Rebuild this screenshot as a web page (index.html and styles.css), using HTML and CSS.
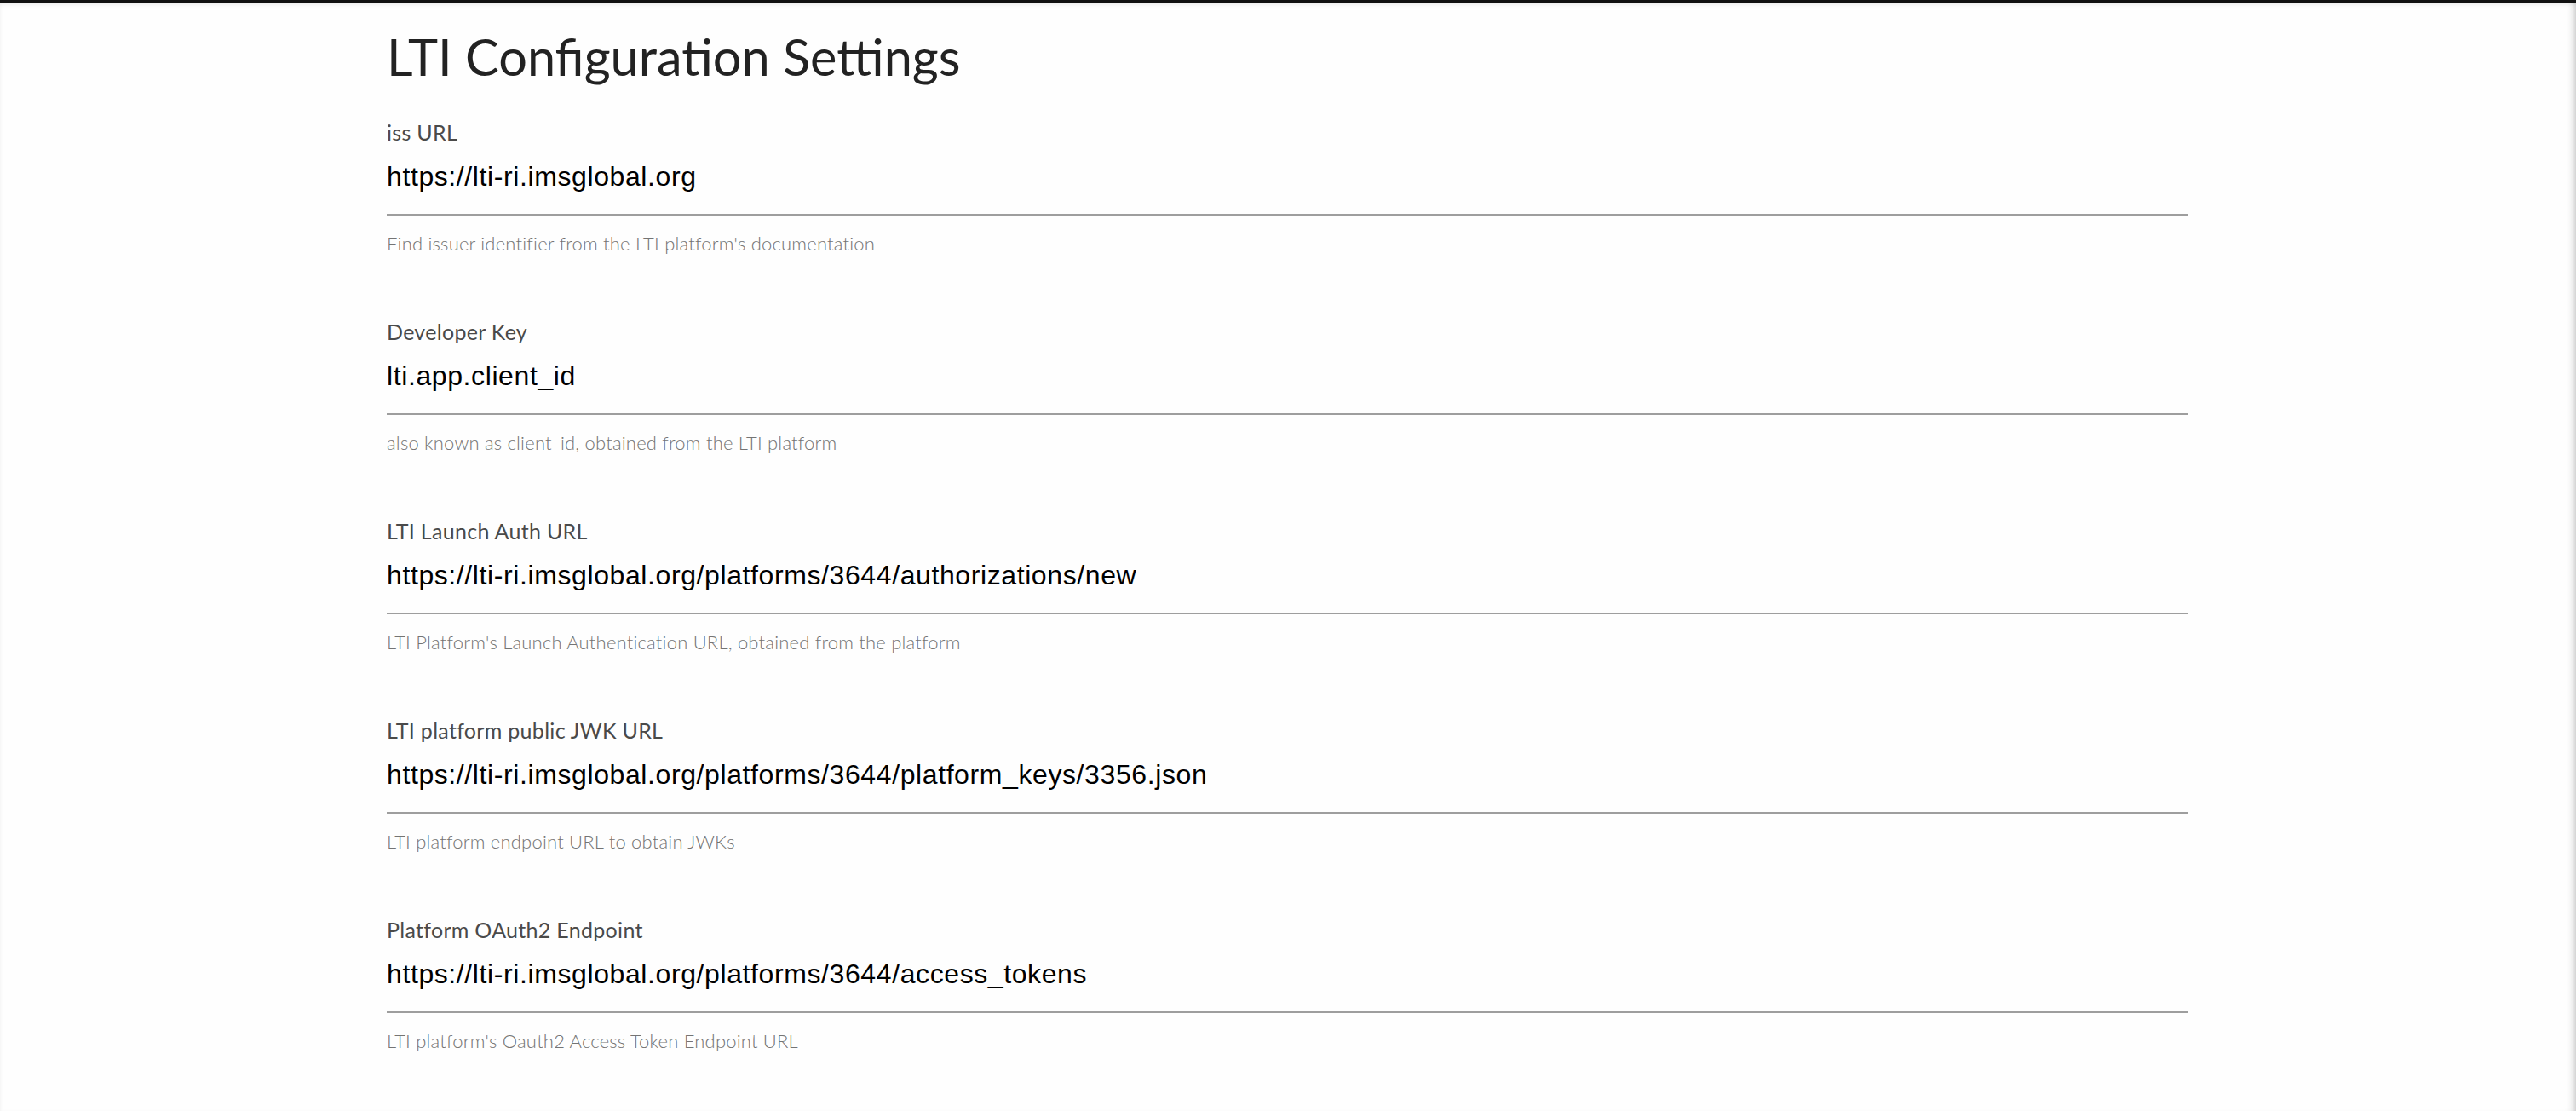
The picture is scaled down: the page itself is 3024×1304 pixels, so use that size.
FILE: index.html
```html
<!DOCTYPE html>
<html lang="en">
<head>
<meta charset="utf-8">
<title>LTI Configuration Settings</title>
<link rel="stylesheet" href="styles.css">
</head>
<body>
<div class="frame-shadow"></div>
<main class="page">
  <h1 class="title">LTI Configuration Settings</h1>

  <div class="field">
    <div class="field-label">iss URL</div>
    <div class="field-value">https://lti-ri.imsglobal.org</div>
    <div class="field-help">Find issuer identifier from the LTI platform's documentation</div>
  </div>

  <div class="field">
    <div class="field-label">Developer Key</div>
    <div class="field-value">lti.app.client_id</div>
    <div class="field-help">also known as client_id, obtained from the LTI platform</div>
  </div>

  <div class="field">
    <div class="field-label">LTI Launch Auth URL</div>
    <div class="field-value">https://lti-ri.imsglobal.org/platforms/3644/authorizations/new</div>
    <div class="field-help">LTI Platform's Launch Authentication URL, obtained from the platform</div>
  </div>

  <div class="field">
    <div class="field-label">LTI platform public JWK URL</div>
    <div class="field-value">https://lti-ri.imsglobal.org/platforms/3644/platform_keys/3356.json</div>
    <div class="field-help">LTI platform endpoint URL to obtain JWKs</div>
  </div>

  <div class="field">
    <div class="field-label">Platform OAuth2 Endpoint</div>
    <div class="field-value">https://lti-ri.imsglobal.org/platforms/3644/access_tokens</div>
    <div class="field-help">LTI platform's Oauth2 Access Token Endpoint URL</div>
  </div>
</main>
</body>
</html>
```

FILE: styles.css
```css
html, body {
  margin: 0;
  padding: 0;
  background: #fefefe;
}

body {
  font-family: Lato, "Noto Sans", sans-serif;
  overflow: hidden;
}

.frame-shadow {
  position: fixed;
  inset: 0;
  pointer-events: none;
  box-shadow:
    inset 0 3px 0 #111,
    inset 0 6px 6px -2px rgba(0, 0, 0, 0.12),
    inset -9px 0 8px -6px rgba(0, 0, 0, 0.18);
  z-index: 10;
}

.page {
  width: 2115px;
  margin-left: 454px;
  padding-top: 31px;
}

.title {
  margin: 0 0 39px 0;
  font-family: Lato, sans-serif;
  font-weight: 400;
  font-size: 59.5px;
  line-height: 70px;
  color: #222;
}

.field {
  margin-bottom: 73px;
}

.field-label {
  font-size: 25px;
  line-height: 30px;
  letter-spacing: 0.3px;
  color: #4a4a4a;
  font-weight: 400;
}

.field-value {
  margin-top: 17px;
  font-family: "Liberation Sans", Arial, sans-serif;
  font-size: 32px;
  line-height: 40px;
  letter-spacing: 0.6px;
  color: #000;
  padding-bottom: 24px;
  border-bottom: 2px solid #9e9e9e;
}

.field-help {
  margin-top: 18px;
  font-size: 22px;
  line-height: 30px;
  letter-spacing: 0.2px;
  font-weight: 300;
  color: #747474;
}
```
